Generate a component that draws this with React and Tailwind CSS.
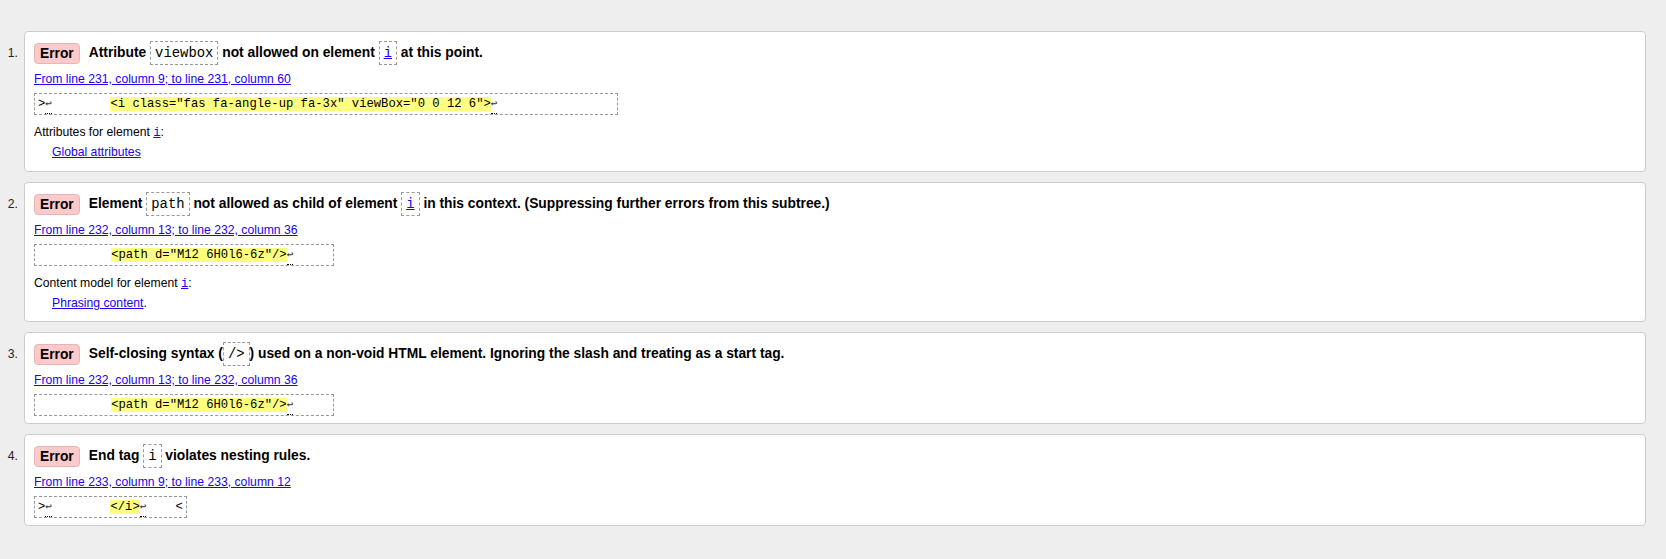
import React from "react";

const SANS = "font-['Liberation_Sans',Arial,Helvetica,sans-serif]";
const MONO = "font-['Liberation_Mono','DejaVu_Sans_Mono',monospace]";

// ── small pieces ──────────────────────────────────────────────────────────────
const Lf = () => (
  <span className="relative">
    <span className="text-[11px] text-[#333]">↩</span>
    <span className="absolute left-0 right-0 bottom-[-3px] border-b border-dotted border-black" />
  </span>
);

const Hl = ({ children }) => <span className="bg-[#ffff80]">{children}</span>;

const Code = ({ children }) => (
  <span className={`${MONO} inline-block align-top font-normal text-[13.9px] leading-[16px] px-[4px] py-[3px] border border-dashed border-[#999]`}>
    {children}
  </span>
);

const Link = ({ children, mono }) => (
  <a href="#" className={`text-[#2200ee] underline ${mono ? MONO : ""}`}>
    {children}
  </a>
);

const Extract = ({ children }) => (
  <div className="mt-[7px] flex">
    <code className={`${MONO} block h-[22px] whitespace-pre text-[12.2px] leading-[20px] px-[3px] border border-dashed border-[#999] text-black`}>
      {children}
    </code>
  </div>
);

// ── one message card ──────────────────────────────────────────────────────────
const Message = ({ n, title, from, extract, extra }) => (
  <li className="flex items-start">
    <span className="w-[24px] shrink-0 text-right pr-[6px] pt-[14px] text-[12.2px] leading-[16px] text-[#222]">{n}.</span>
    <div className="flex-1 bg-white border border-[#cccccc] rounded-[4px] pt-[9px] pb-[7px] px-[9px]">
      <div className="flex items-center gap-[9px] h-[24px]">
        <span className="inline-block bg-[#fccaca] border border-[#eab4b4] rounded-[4px] px-[5px] text-[13.8px] font-bold leading-[19px] text-black">
          Error
        </span>
        <span className="text-[13.8px] font-bold leading-[24px] whitespace-nowrap text-black">{title}</span>
      </div>
      <div className="mt-[7px] h-[14px] text-[12.2px] leading-[14px]">
        <Link>{from}</Link>
      </div>
      <Extract>{extract}</Extract>
      {extra}
    </div>
  </li>
);

const Extra = ({ label, link, after, last = "pb-[5px]" }) => (
  <div className={`text-[12.2px] leading-[14px] text-black ${last}`}>
    <p className="mt-[10px] h-[14px]">
      {label} <Link mono>i</Link>:
    </p>
    <p className="mt-[6px] h-[14px] pl-[18px]">
      <Link>{link}</Link>
      {after}
    </p>
  </div>
);

// ── page ─────────────────────────────────────────────────────────────────────
export default function App() {
  return (
    <div className={`${SANS} min-h-screen bg-[#eeeeee] pt-[31px] pr-[20px] pb-[30px]`}>
      <ol className="flex flex-col gap-[10px]">
        <Message
          n={1}
          title={
            <>
              Attribute <Code>viewbox</Code> not allowed on element <Code><Link mono>i</Link></Code> at this point.
            </>
          }
          from="From line 231, column 9; to line 231, column 60"
          extract={
            <>
              {">"}<Lf />{"        "}
              <Hl>{'<i class="fas fa-angle-up fa-3x" viewBox="0 0 12 6">'}</Hl>
              <Lf />{"                "}
            </>
          }
          extra={<Extra label="Attributes for element" link="Global attributes" after="" />}
        />
        <Message
          n={2}
          title={
            <>
              Element <Code>path</Code> not allowed as child of element <Code><Link mono>i</Link></Code> in this context. (Suppressing further errors from this subtree.)
            </>
          }
          from="From line 232, column 13; to line 232, column 36"
          extract={
            <>
              {"          "}
              <Hl>{'<path d="M12 6H0l6-6z"/>'}</Hl>
              <Lf />{"     "}
            </>
          }
          extra={<Extra label="Content model for element" link="Phrasing content" after="." last="pb-[4px]" />}
        />
        <Message
          n={3}
          title={
            <>
              Self-closing syntax (<Code>/&gt;</Code>) used on a non-void HTML element. Ignoring the slash and treating as a start tag.
            </>
          }
          from="From line 232, column 13; to line 232, column 36"
          extract={
            <>
              {"          "}
              <Hl>{'<path d="M12 6H0l6-6z"/>'}</Hl>
              <Lf />{"     "}
            </>
          }
        />
        <Message
          n={4}
          title={
            <>
              End tag <Code>i</Code> violates nesting rules.
            </>
          }
          from="From line 233, column 9; to line 233, column 12"
          extract={
            <>
              {">"}<Lf />{"        "}
              <Hl>{"</i>"}</Hl>
              <Lf />{"    <"}
            </>
          }
        />
      </ol>
    </div>
  );
}
